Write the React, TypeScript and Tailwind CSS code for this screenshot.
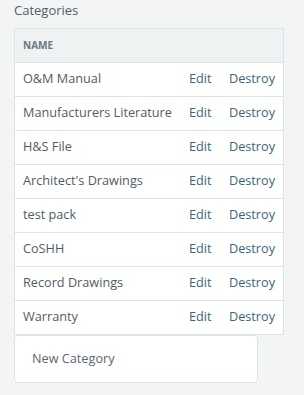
import React from "react";

const rows = [
  "O&M Manual",
  "Manufacturers Literature",
  "H&S File",
  "Architect's Drawings",
  "test pack",
  "CoSHH",
  "Record Drawings",
  "Warranty",
];

export default function App() {
  return (
    <div
      className="min-h-[395px] w-[304px] bg-[#f3f5f4] px-[14px] pt-[1px] text-[#525c66]"
      style={{ fontFamily: '"Open Sans", "Liberation Sans", sans-serif' }}
    >
      <div className="h-[27px] pt-[1px] text-[13px] leading-[16px]">Categories</div>
      <div className="w-[270px] border border-[#dde3e5] bg-white text-[12.7px]">
        <div className="flex h-[33px] items-center bg-[#eef2f3] pl-[8px] text-[10px] font-bold uppercase text-[#6c7780]">
          Name
        </div>
        {rows.map((r) => (
          <div key={r} className="flex h-[34px] items-center border-t border-[#dde3e5] pb-[1px] pl-[8px] pr-[8px]">
            <span className="flex-1">{r}</span>
            <span className="w-[40px] text-[#3a6677]">Edit</span>
            <span className="text-[#3a6677]">Destroy</span>
          </div>
        ))}
      </div>
      <div className="flex h-[48px] w-[244px] items-center rounded-[4px] border border-[#dde3e5] bg-white pl-[17px] text-[12.7px] text-[#5b6670]">
        New Category
      </div>
    </div>
  );
}
